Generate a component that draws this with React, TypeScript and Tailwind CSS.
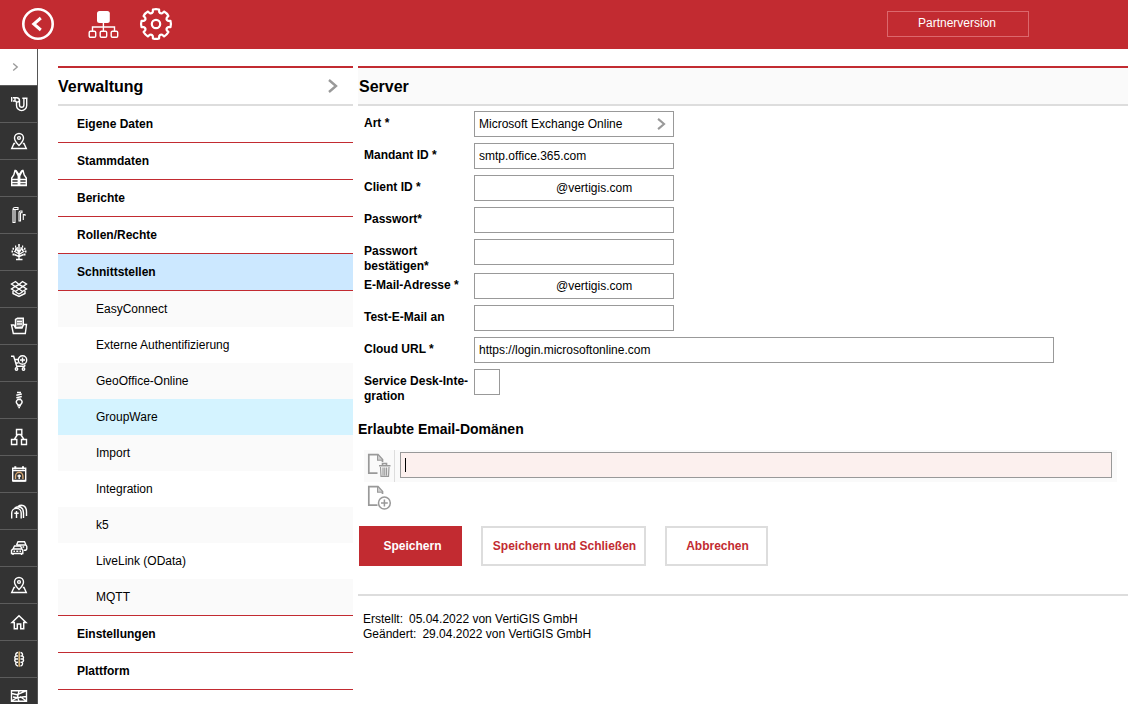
import type { InputHTMLAttributes, ReactNode } from "react";

const polar = (radius: number, degrees: number) => {
  const a = (degrees * Math.PI) / 180;
  return `${(17 + radius * Math.sin(a)).toFixed(2)} ${(17 - radius * Math.cos(a)).toFixed(2)}`;
};

const gearPath =
  Array.from({ length: 8 }, (_, i) => {
    const c = i * 45;
    return `${i === 0 ? "M" : "L"}${polar(12.4, c - 15)}L${polar(14.8, c - 12)}Q${polar(15.4, c)} ${polar(14.8, c + 12)}L${polar(12.4, c + 15)}Q${polar(10.8, c + 22.5)} ${polar(12.4, c + 30)}`;
  }).join("") + "Z";

const pin = (
  <>
    <path d="M9 13.5C6 10.5 4.5 8.5 4.5 6a4.5 4.5 0 0 1 9 0c0 2.5-1.5 4.5-4.500 7.500z" />
    <circle cx="9" cy="6" r="1.400" />
    <path d="M5.200 11.500H4l-2.300 5h14.600l-2.300-5h-1.200" />
  </>
);

const modules: { name: string; icon: ReactNode }[] = [
  {
    name: "Kanal",
    icon: (
      <>
        <path d="M1.700 2v4.700M3 2.800h3.500q3 0 3 3v4.200a2.200 2.200 0 0 0 4.400 0V4M3 6h1.800q1.700 0 1.700 1.600V10.500a5.100 5.100 0 0 0 10.200 0V4M12.300 3.200h5.200M6.600 7.500l3-1.700M5 3v3" />
      </>
    ),
  },
  { name: "Standorte", icon: pin },
  {
    name: "Arbeitsschutz",
    icon: (
      <>
        <path d="M5 1.500 3.800 6 1.700 9v7.500h6.600V7L5.500 1.500zM13 1.500 14.200 6l2.100 3v7.500H9.700V7l2.800-5.500zM6 1.500 9 6l3-4.500" />
        <path d="M1.700 10.500h6.600M1.700 13.500h6.600M1.700 16.300h6.600M9.700 10.500h6.600M9.700 13.500h6.600M9.700 16.300h6.600" strokeWidth="1.600" />
      </>
    ),
  },
  {
    name: "Beleuchtung",
    icon: (
      <path
        d="M3 16.500V3.500q0-2 2-2h3v2H5v13zM9 15V6.500q0-1.500 1.500-1.500H12v1.800h-1.500V15zM13.300 14V8.500H15v1.500M3 3.500h2.500"
        strokeWidth="1.100"
      />
    ),
  },
  {
    name: "Baum",
    icon: (
      <>
        <path d="M6 16.500h6.500M9 16.500V3M9 11 4 8M9 9.500 5.500 4.500M9 9.500l3.500-5M9 11.500l5.500-3.500M9 13.500l4.500-2M9 13.500l-4.500-2" />
        <path
          d="M8.200 2h1.600M5 3.500h1.200M12 3.500h1.200M2.500 5.700h1.500M14 5.700h1.500M1.500 8.500h1.500M15 8.500h1.500M2.500 11.500h2M13.500 11.500h2M6.800 5h1M10.500 5h1M5 7h1.500M12 7h1.500"
          strokeWidth="1.900"
        />
      </>
    ),
  },
  {
    name: "Lager",
    icon: (
      <path d="M9 4.500 5.500 1.500 1.500 4l3.500 2.500L1.500 9 5.500 11.500 9 9l3.500 2.500 4-2.500L13 6.500 16.500 4l-4-2.500zM5 6.500 9 9l4-2.500L9 4.500zM3 11v2.500l6 3 6-3V11M5.500 12 9 14l3.500-2" />
    ),
  },
  {
    name: "Akten",
    icon: (
      <>
        <path d="M5.500 11V2.500L7.500 1.200h5.800V10z" fill="#777" />
        <path d="M7 4.500h5M7 7h5" />
        <path d="M4 8H1.500l1.800 8.500h12L16.500 7.500h-2.800L12 11H5.500z" fill="#333" />
      </>
    ),
  },
  {
    name: "Bestellungen",
    icon: (
      <>
        <path d="M1 2.300h2.700l3 10h8M4.500 5.500H8M5.500 9h3M15 10.500l-.5 2" />
        <circle cx="12.500" cy="6" r="4.200" />
        <path d="M10 6h5M12.500 3.500v5" />
        <circle cx="6.500" cy="15" r="1.200" />
        <circle cx="13.500" cy="15" r="1.200" />
      </>
    ),
  },
  {
    name: "Leuchtmittel",
    icon: (
      <>
        <path d="M7 1.500h4M6.300 4.200l5.500-1.200M6.300 6.700l5.500-1.200M7.500 8.300h3.500" />
        <path d="M7.800 8.500Q5.700 10 6.500 12l1.500 2h2.400l1.500-2q.8-2-1.300-3.500zM7.300 14.800h3.700M8.300 16.500h1.700" />
      </>
    ),
  },
  {
    name: "Organisation",
    icon: (
      <path d="M6.500 1.500h5.300v5H6.500zM1.500 11.500h5.300v5H1.500zM11.500 11.500h5v5h-5zM7.500 6.500l-3.200 5M10.700 6.500l3.300 5" />
    ),
  },
  {
    name: "Termine",
    icon: (
      <>
        <path d="M2.700 3.200h13v12.500h-13zM2.700 5.500h13" />
        <path d="M2.700 15.700h13M5.300 1.200v3M13 1.200v3" strokeWidth="2" />
        <path d="M5.500 14v-3a3.700 3.700 0 0 1 7.400 0v3" stroke="#d8a873" />
        <path d="M9.200 9.500V14M7.500 11h3.400" />
      </>
    ),
  },
  {
    name: "Friedhof",
    icon: (
      <>
        <path d="M1.700 16.500V11a4.700 4.700 0 0 1 9.500 0v5.500" />
        <path d="M4.500 6.500Q6 4.700 8.300 4.700q5.200.3 5.200 6.300v5M8 4.500q1.500-1.300 3.500-1.300 5 .3 5 6.800v4" />
        <path d="M6.500 9v7M4.300 11.300h4.400" />
      </>
    ),
  },
  {
    name: "Fuhrpark",
    icon: (
      <>
        <path d="M6.500 6 8 2.700h6.500L16 6l.8 1.500V10l-1 1.200h-2M6.500 6h9.300M12.500 8h1.700" />
        <path d="M3 10l1.500-3h6l1.500 3 .8 1.300v3.200H1.500v-3.200zM3 10h9M3 16v-1M11.500 16v-1M3.500 12.300h1.500M9.500 12.300h1.500M6.300 12.300h2" strokeWidth="1.400" />
      </>
    ),
  },
  { name: "Objekte", icon: pin },
  {
    name: "Gebäude",
    icon: <path d="M2 9.500 9 2.700l7 6.800h-2.300v6.300h-3V11H7.300v4.800h-3V9.500z" strokeWidth="1.500" />,
  },
  {
    name: "Spielplatz",
    icon: (
      <>
        <path d="M8 2.500q-3 .5-2 3.500-2 1-.7 3-1.300 2 .7 3.300-1 3 2 3.700M10.500 2.500q2.700.5 1.800 3.500 2 1 .7 3 1.300 2-.7 3.300 1 3-1.800 3.700M6 6h2M5.500 9H8M6 12.300h2M10.500 6h2M10.500 9h2.300M10.500 12.300h2" />
        <path d="M9.200 1.500v15.300" stroke="#d8b478" strokeWidth="1.600" />
      </>
    ),
  },
  {
    name: "Karte",
    icon: (
      <path d="M1.500 3.700h15v10.600h-15zM2 6.500l5 1.300L15.500 4M2 13.500l5.500-2.800L16 9.500M9 4l-1.500 6L9 14M10 9.500l6 4.300M3 10l4.500.8" />
    ),
  },
];

const topItems = ["Eigene Daten", "Stammdaten", "Berichte", "Rollen/Rechte", "Schnittstellen"];
const subItems = [
  "EasyConnect",
  "Externe Authentifizierung",
  "GeoOffice-Online",
  "GroupWare",
  "Import",
  "Integration",
  "k5",
  "LiveLink (OData)",
  "MQTT",
];
const bottomItems = ["Einstellungen", "Plattform"];

function Chevron({ className }: { className: string }) {
  return (
    <svg viewBox="0 0 10 14" className={className} fill="none" stroke="#999" strokeWidth="2.400" aria-hidden="true">
      <path d="M1 1l7 6-7 6" />
    </svg>
  );
}

function NavItem({ label, active = false }: { label: string; active?: boolean }) {
  return (
    <li className={active ? "border-b border-[#c22b31] bg-[#cce8ff]" : "border-b border-[#c22b31]"}>
      <a href="#" className="flex h-9 items-center pl-[19px] font-bold">
        {label}
      </a>
    </li>
  );
}

function Row({ id, label, children }: { id: string; label: string; children: ReactNode }) {
  return (
    <div className="flex min-h-8 items-start">
      <label htmlFor={id} className="-mb-px w-[110px] shrink-0 pt-[5px] font-bold">
        {label}
      </label>
      {children}
    </div>
  );
}

function TextField({
  id,
  label,
  className = "w-[200px] pl-1",
  ...rest
}: { id: string; label: string; className?: string } & InputHTMLAttributes<HTMLInputElement>) {
  return (
    <Row id={id} label={label}>
      <input id={id} className={`h-[26px] border border-[#999] bg-white outline-none ${className}`} {...rest} />
    </Row>
  );
}

function PageOutline() {
  return (
    <>
      <path d="M15.500 9V6.500L11 1.700H1.800v18.500h8.700" strokeWidth="1.700" />
      <path d="M10.700 2v5h5" strokeWidth="1.400" />
      <path d="M11 2.500v4h4z" fill="#ccc" stroke="none" />
    </>
  );
}

export default function App() {
  return (
    <div className="flex h-screen flex-col overflow-hidden bg-white font-['Liberation_Sans',Arial,sans-serif] text-[12px] leading-[15px] text-black">
      <header className="flex h-[49px] shrink-0 items-center bg-[#c22b31] pr-[99px] pb-0.5 pl-[21px] text-white">
        <button type="button" aria-label="Zurück">
          <svg viewBox="0 0 34 34" className="size-[34px]" fill="none" stroke="currentColor">
            <circle cx="17" cy="17" r="14.700" strokeWidth="2.600" />
            <path d="M19.800 11l-7 6 7 6" strokeWidth="3" />
          </svg>
        </button>
        <button type="button" aria-label="Struktur" className="ml-[33px]">
          <svg viewBox="0 0 32 34" className="h-[34px] w-8" fill="none" stroke="currentColor" strokeWidth="1.400">
            <rect x="9" y="4" width="12.800" height="12" rx="2.500" fill="currentColor" stroke="none" />
            <path d="M15.400 16v8M4.500 24v-4h22v4" />
            <rect x="1.200" y="24.300" width="6.500" height="6" rx="1.300" />
            <rect x="12.200" y="24.300" width="6.500" height="6" rx="1.300" />
            <rect x="23.200" y="24.300" width="6.500" height="6" rx="1.300" />
          </svg>
        </button>
        <button type="button" aria-label="Einstellungen" className="ml-[19px]">
          <svg viewBox="0 0 34 34" className="size-[34px]" fill="none" stroke="currentColor" strokeWidth="2.200" strokeLinejoin="round">
            <path d={gearPath} />
            <circle cx="17" cy="17" r="4.200" />
          </svg>
        </button>
        <button type="button" className="ml-auto h-[26px] w-[142px] border border-[#dc686d] pr-0.5">
          Partnerversion
        </button>
      </header>

      <div className="flex min-h-0 flex-1">
        <nav aria-label="Module" className="w-[38px] shrink-0 overflow-hidden border-r border-[#555]">
          <button type="button" aria-label="Ausklappen" className="flex h-9 w-full items-center pl-3">
            <Chevron className="h-2 w-[7px]" />
          </button>
          {modules.map((m) => (
            <a
              key={m.name}
              href="#"
              aria-label={m.name}
              className="flex h-[37px] items-center border-t border-[#5c5c5c] bg-[#333] pl-2.5 text-white"
            >
              <svg viewBox="0 0 18 18" className="size-[18px]" fill="none" stroke="currentColor" strokeWidth="1.400">
                {m.icon}
              </svg>
            </a>
          ))}
        </nav>

        <nav aria-label="Verwaltung" className="mt-[17px] ml-5 w-[295px] shrink-0">
          <div className="flex h-10 items-center justify-between border-t-2 border-b-2 border-t-[#c22b31] border-b-[#ddd] pr-[15px]">
            <h2 className="text-[16px] font-bold">Verwaltung</h2>
            <Chevron className="h-3.5 w-2.5" />
          </div>
          <ul>
            {topItems.map((t) => (
              <NavItem key={t} label={t} active={t === "Schnittstellen"} />
            ))}
          </ul>
          <ul className="border-b border-[#c22b31]">
            {subItems.map((t) => (
              <li key={t} className={t === "GroupWare" ? "bg-[#d4f3ff]" : "odd:bg-[#fafafa]"}>
                <a href="#" className="flex h-9 items-center pl-[38px]">
                  {t}
                </a>
              </li>
            ))}
          </ul>
          <ul>
            {bottomItems.map((t) => (
              <NavItem key={t} label={t} />
            ))}
          </ul>
        </nav>

        <main className="mt-[17px] ml-[5px] min-w-0 flex-1">
          <div className="flex h-10 items-center border-t-2 border-b-2 border-t-[#c22b31] border-b-[#ddd] bg-[#fafafa] pl-px">
            <h1 className="text-[16px] font-bold">Server</h1>
          </div>

          <form onSubmit={(e) => e.preventDefault()}>
            <div className="pt-[5px] pl-1.5">
              <Row id="art" label="Art *">
                <div className="relative w-[200px]">
                  <select id="art" className="h-[26px] w-full appearance-none border border-[#999] bg-white pl-1 outline-none">
                    <option>Microsoft Exchange Online</option>
                  </select>
                  <Chevron className="pointer-events-none absolute top-[7px] right-2 h-3 w-[9px]" />
                </div>
              </Row>
              <TextField id="mandant" label="Mandant ID *" defaultValue="smtp.office.365.com" />
              <TextField id="client" label="Client ID *" defaultValue="@vertigis.com" className="w-[200px] pl-[81px]" />
              <TextField id="pw" label="Passwort*" type="password" />
              <TextField id="pw2" label="Passwort bestätigen*" type="password" />
              <TextField id="mail" label="E-Mail-Adresse *" defaultValue="@vertigis.com" className="w-[200px] pl-[81px]" />
              <TextField id="test" label="Test-E-Mail an" />
              <TextField
                id="cloud"
                label="Cloud URL *"
                defaultValue="https://login.microsoftonline.com"
                className="w-full max-w-[580px] pl-1"
              />
              <Row id="desk" label={"Service Desk-Inte\u00ADgration"}>
                <input id="desk" type="checkbox" className="size-[26px] appearance-none border border-[#999] bg-white" />
              </Row>
            </div>

            <h2 className="mt-[18px] text-[14px] leading-4 font-bold">Erlaubte Email-Domänen</h2>

            <div className="mt-[13px] mr-[11px] ml-1.5 flex h-8 items-start bg-[#fafafa]">
              <button
                type="button"
                aria-label="Domäne löschen"
                className="flex h-8 w-[31px] shrink-0 items-start border-r border-[#ddd] pt-[3px] pl-[3px]"
              >
                <svg viewBox="0 0 25 25" className="size-[25px]" fill="none" stroke="#999">
                  <PageOutline />
                  <path d="M12 12.700h11.500M15.500 12v-1.500h4V12" strokeWidth="1.600" />
                  <path d="M13.500 14l.5 9.300h7.500l.5-9.300M16 14.500v8M17.800 14.500v8M19.600 14.500v8" strokeWidth="1.200" />
                </svg>
              </button>
              <div className="relative mr-[5px] ml-[5px] flex-1 pt-0.5">
                <input
                  aria-label="Email-Domäne"
                  className="block h-[26px] w-full border border-[#999] bg-[#fcf0ee] pl-1 outline-none"
                />
                <span className="absolute top-2 left-[5px] h-3.5 w-px bg-black" />
              </div>
            </div>
            <button type="button" aria-label="Domäne hinzufügen" className="mt-[3px] ml-[9px] block">
              <svg viewBox="0 0 25 25" className="size-[25px]" fill="none" stroke="#999">
                <PageOutline />
                <circle cx="17.400" cy="18" r="5.900" strokeWidth="1.500" />
                <path d="M14 18h6.800M17.400 14.600v6.800" strokeWidth="1.500" />
              </svg>
            </button>

            <div className="mt-4 ml-px flex gap-[19px] font-bold">
              <button type="submit" className="h-10 w-[103px] bg-[#c22b31] pl-1 text-white">
                Speichern
              </button>
              <button type="button" className="h-10 w-[165px] border-2 border-[#ddd] pl-0.5 text-[#c22b31]">
                Speichern und Schließen
              </button>
              <button type="button" className="h-10 w-[103px] border-2 border-[#ddd] pl-0.5 text-[#c22b31]">
                Abbrechen
              </button>
            </div>
          </form>

          <footer className="mt-7 border-t-2 border-[#ddd] pt-4 pl-[5px]">
            <p className="flex gap-1.5">
              <span>Erstellt:</span>
              <span>05.04.2022 von VertiGIS GmbH</span>
            </p>
            <p className="flex gap-1.5">
              <span>Geändert:</span>
              <span>29.04.2022 von VertiGIS GmbH</span>
            </p>
          </footer>
        </main>
      </div>
    </div>
  );
}
